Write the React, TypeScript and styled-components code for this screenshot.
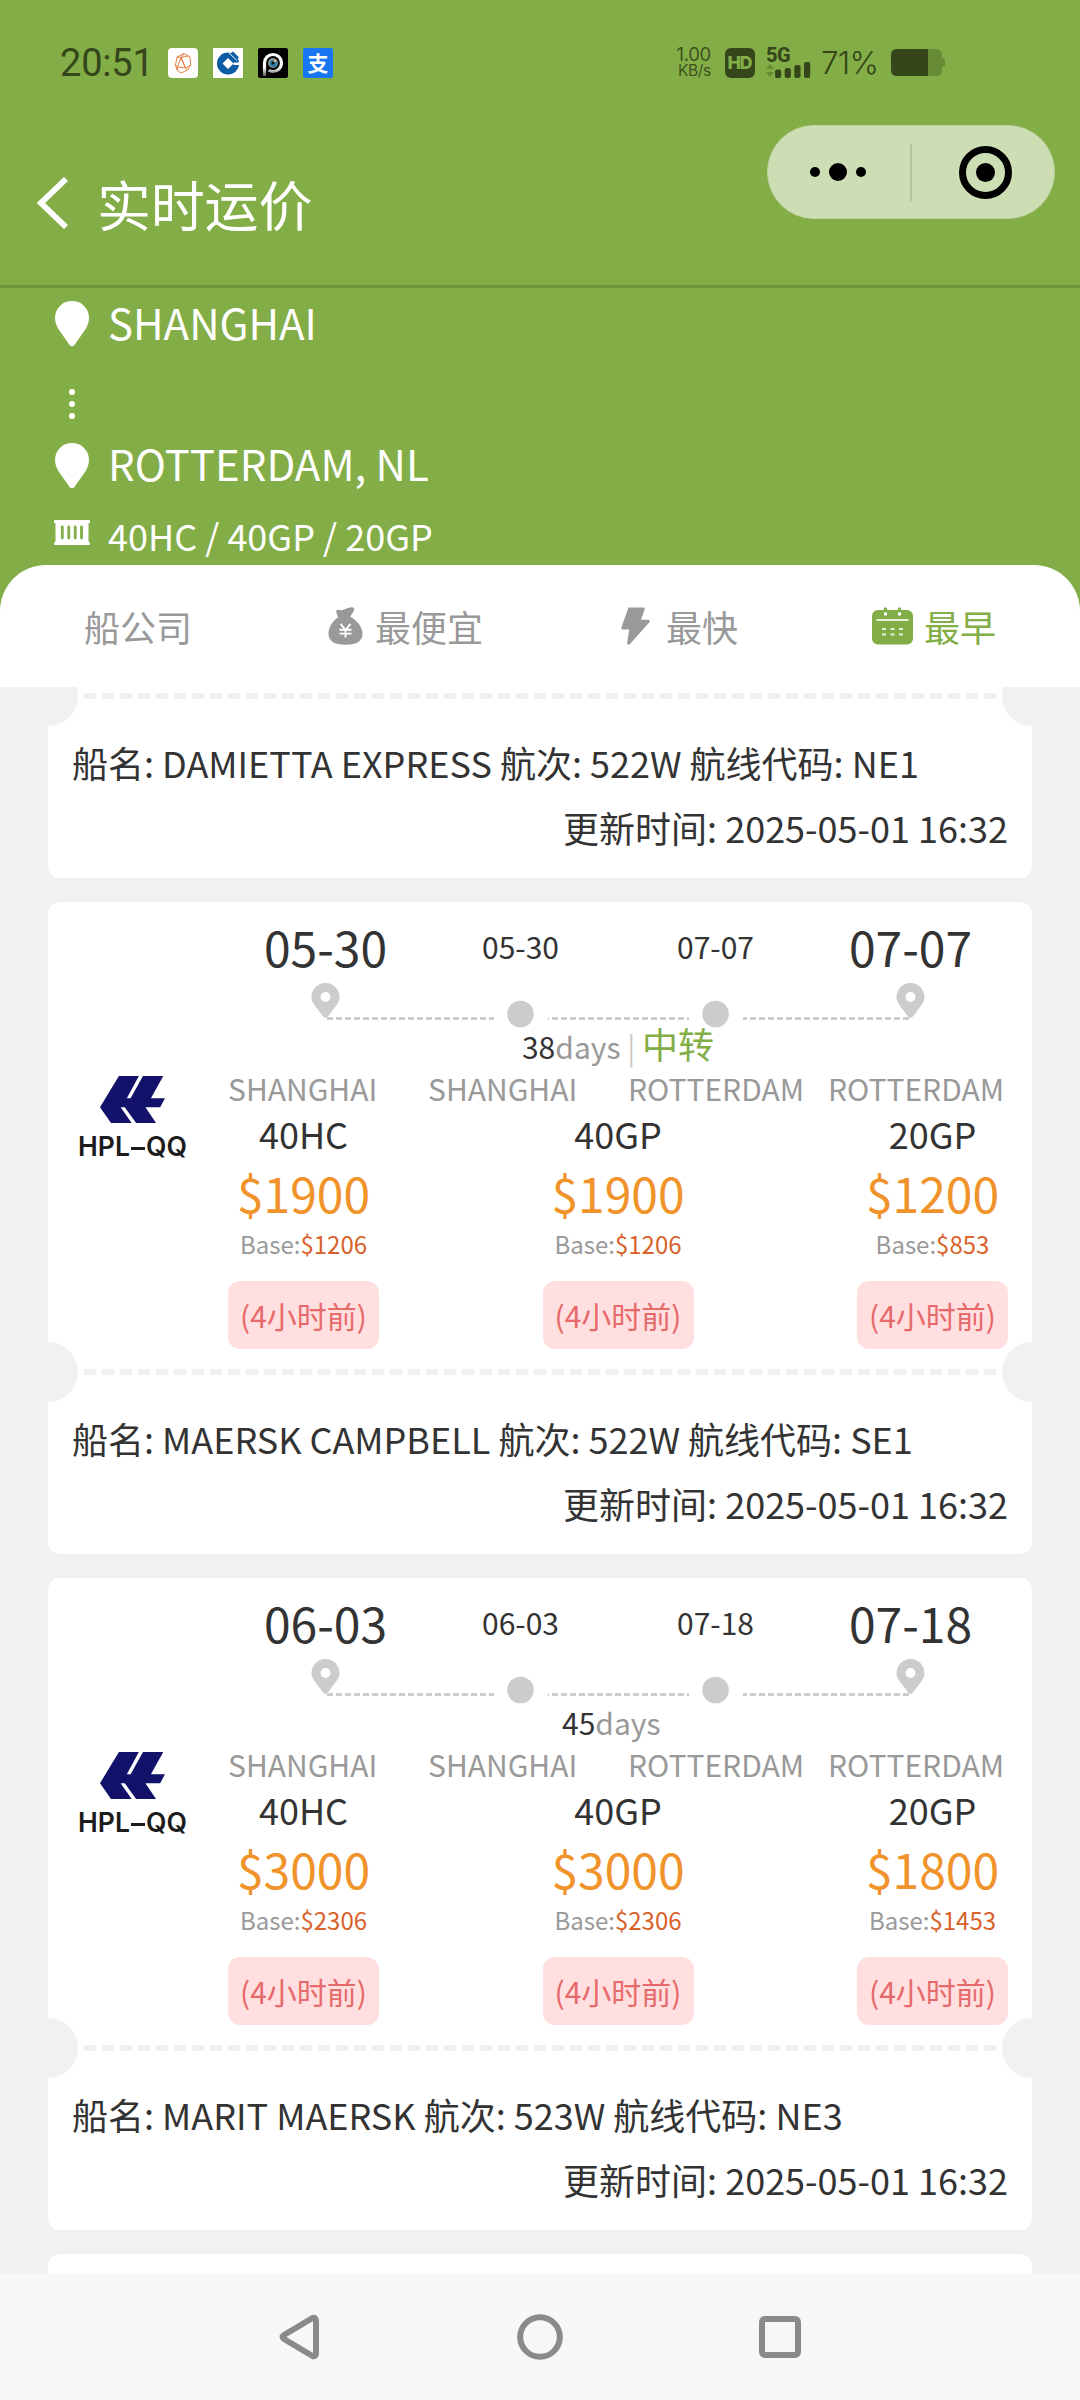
import React from "react";
import styled, { createGlobalStyle } from "styled-components";

const cjk = '"Noto Sans CJK SC", "Noto Sans", sans-serif';
const c = {
  green: "#83ad46",
  ink: "#333333",
  grey: "#999999",
  light: "#cccccc",
  bg: "#f1f1f1",
  status: "#35461a",
};

const GlobalStyle = createGlobalStyle`
  * { box-sizing: border-box; }
  body { margin: 0; background: ${c.bg}; }
  svg { display: block; flex: none; }
`;

const Screen = styled.div`
  width: 1080px;
  height: 2400px;
  display: flex;
  flex-direction: column;
  overflow: hidden;
  background: ${c.bg};
  font-family: ${cjk};
  color: ${c.ink};
  white-space: nowrap;
`;

const Top = styled.header`
  height: 288px;
  flex: none;
  background: ${c.green};
  border-bottom: 3px solid #719439;
`;

const StatusBar = styled.div`
  height: 125px;
  padding: 0 135px 0 60px;
  display: flex;
  align-items: center;
  color: ${c.status};
  font-family: Inter, Roboto, sans-serif;
`;

const Clock = styled.span`
  width: 108px;
  font: 400 38px/40px Roboto, sans-serif;
  letter-spacing: -0.2px;
`;

const AppIcons = styled.div`
  display: flex;
  gap: 15px;
  flex: 1;
`;

const AppIcon = styled.span<{ $bg: string; $radius?: number }>`
  width: 30px;
  height: 30px;
  border-radius: ${(p) => p.$radius ?? 4}px;
  background: ${(p) => p.$bg};
`;

const AlipayGlyph = styled.span`
  display: block;
  color: #fff;
  font: 700 21px/29px ${cjk};
  text-align: center;
`;

const Speed = styled.div`
  width: 36px;
  margin-right: 14px;
  display: flex;
  flex-direction: column;
  align-items: flex-end;
  color: #3d521d;
`;

const SpeedLine = styled.span<{ $size: number; $height: number }>`
  font-size: ${(p) => p.$size}px;
  line-height: ${(p) => p.$height}px;
  letter-spacing: -0.3px;
`;

const HdBadge = styled.span`
  width: 30px;
  height: 30px;
  margin-right: 11px;
  border-radius: 6px;
  background: ${c.status};
  color: ${c.green};
  font: 800 18px/30px Inter, sans-serif;
  letter-spacing: -1.6px;
  text-indent: -1.6px;
  text-align: center;
`;

const Signal = styled.div`
  width: 46px;
  margin-right: 9px;
`;

const SignalLabel = styled.div`
  height: 15px;
  font: 800 20px/15px Roboto, sans-serif;
  letter-spacing: -0.6px;
`;

const Percent = styled.span`
  width: 70px;
  font: 300 31.5px/34px Inter, sans-serif;
  letter-spacing: -0.8px;
  padding-top: 1px;
`;

const TitleBar = styled.div`
  height: 160px;
  padding: 0 25px 0 37px;
  display: flex;
  align-items: flex-start;
`;

const BackSlot = styled.div`
  width: 60px;
  padding-top: 52px;
`;

const Title = styled.h1`
  margin: 0;
  padding-top: 39px;
  flex: 1;
  font-weight: 400;
  font-size: 54px;
  line-height: 80px;
  letter-spacing: -0.2px;
  color: #fff;
`;

const Capsule = styled.div`
  width: 288px;
  height: 94px;
  border-radius: 47px;
  border: 1px solid #bfd2a0;
  background: #cdddb4;
  display: flex;
  align-items: center;
`;

const CapsuleHalf = styled.div`
  flex: 1;
  display: flex;
  justify-content: center;
`;

const CapsuleRule = styled.div`
  width: 2px;
  height: 57px;
  background: #b3c59a;
`;

const RouteHead = styled.section`
  height: 323px;
  flex: none;
  padding: 5px 0 0 54px;
  background: ${c.green};
  color: #fff;
`;

const RouteLine = styled.div<{ $height: number }>`
  height: ${(p) => p.$height}px;
  display: flex;
  align-items: center;
  gap: 18px;
`;

const RouteIcon = styled.span<{ $lift?: number }>`
  width: 36px;
  margin-bottom: ${(p) => p.$lift ?? 0}px;
  display: flex;
  justify-content: center;
`;

const PortName = styled.span`
  margin: -20px 0 -15px;
  font-size: 42px;
  line-height: 60px;
`;

const Boxes = styled.span`
  font-size: 36px;
  line-height: 52px;
`;

const Tabs = styled.nav`
  height: 122px;
  flex: none;
  margin-top: -46px;
  padding: 0 84px;
  border-radius: 46px 46px 0 0;
  background: #fff;
  display: flex;
  justify-content: space-between;
  align-items: center;
`;

const Tab = styled.div<{ $active?: boolean; $gap?: number; $shift?: number }>`
  display: flex;
  align-items: center;
  gap: ${(p) => p.$gap ?? 12}px;
  margin-left: ${(p) => p.$shift ?? 0}px;
  margin-right: ${(p) => -(p.$shift ?? 0)}px;
  font-size: 36px;
  line-height: 52px;
  color: ${(p) => (p.$active ? c.green : c.grey)};
`;

const TabText = styled.span`
  margin-bottom: 1px;
`;

const List = styled.main`
  flex: 1;
  min-height: 0;
  overflow: hidden;
  padding: 0 48px;
`;

const Card = styled.article<{ $cut?: boolean }>`
  margin: ${(p) => (p.$cut ? "-14px" : "0")} 0 24px;
  border-radius: 12px;
  background: #fff;
  overflow: hidden;
`;

const Body = styled.div`
  height: 447px;
  padding: 12px 24px 0;
  display: flex;
  justify-content: space-between;
`;

const Carrier = styled.div`
  width: 121px;
  padding-top: 162px;
  display: flex;
  flex-direction: column;
  align-items: center;
`;

const CarrierName = styled.div`
  margin-top: 8px;
  font: 600 26.5px/31px Inter, "Liberation Sans", sans-serif;
  color: #1c1c1c;
`;

const NameDash = styled.span`
  display: inline-block;
  width: 14px;
  height: 3px;
  margin: 0 1px;
  vertical-align: 6px;
  background: #1c1c1c;
`;

const Info = styled.div`
  width: 780px;
`;

const Dates = styled.div`
  height: 66px;
  margin-top: -1px;
  margin-bottom: 1px;
  display: grid;
  grid-template-columns: repeat(4, 1fr);
  text-align: center;
`;

const DateText = styled.span<{ $big?: boolean }>`
  font-size: ${(p) => (p.$big ? 48 : 30)}px;
  line-height: 66px;
`;

const Duration = styled.div`
  height: 30px;
  font-size: 36px;
  line-height: 30px;
  text-align: center;
  white-space: pre;
`;

const Small = styled.span<{ $color: string }>`
  font-size: 30px;
  color: ${(p) => p.$color};
`;

const Transit = styled.span`
  color: ${c.green};
`;

const Ports = styled.div`
  height: 52px;
  padding-top: 8px;
  display: grid;
  grid-template-columns: 200px 200px 200px 180px;
  font-size: 30px;
  line-height: 44px;
  color: ${c.grey};
`;

const Prices = styled.div`
  display: flex;
  justify-content: space-between;
`;

const PriceCol = styled.div`
  width: 151px;
  display: flex;
  flex-direction: column;
  align-items: center;
`;

const Box = styled.span`
  margin: -1px 0 1px;
  font-size: 36px;
  line-height: 48px;
`;

const Price = styled.span`
  font-size: 48px;
  line-height: 68px;
  color: #f0932b;
`;

const Base = styled.span`
  font-size: 24px;
  line-height: 36px;
  color: ${c.grey};
`;

const BaseValue = styled.span`
  color: #d9622a;
`;

const Ago = styled.span`
  width: 100%;
  margin-top: 19px;
  border-radius: 12px;
  background: #ffdfe0;
  color: #e66a6a;
  font-size: 30px;
  line-height: 68px;
  text-align: center;
`;

const Perforation = styled.div`
  position: relative;
  height: 46px;
  padding: 20px 36px;

  &::before,
  &::after {
    content: "";
    position: absolute;
    top: -7px;
    width: 60px;
    height: 60px;
    border-radius: 50%;
    background: ${c.bg};
  }
  &::before { left: -30px; }
  &::after { right: -30px; }
`;

const Dashes = styled.div`
  height: 6px;
  background: repeating-linear-gradient(90deg, ${c.bg} 0 12px, transparent 12px 18px);
`;

const Footer = styled.div`
  height: 159px;
  padding: 11px 24px 0;
  font-size: 36px;
  line-height: 65px;
`;

const Updated = styled.div`
  text-align: right;
`;

const NextCard = styled(Card)`
  height: 60px;
`;

const NavBar = styled.footer`
  height: 126px;
  flex: none;
  background: #f7f7f7;
  display: flex;
  justify-content: center;
  align-items: center;
  gap: 194px;
`;

const MapPin = () => (
  <svg width="34" height="46" viewBox="0 0 34 46">
    <path fill="#fff" d="M17 0C7.500 0 0 7.500 0 17c0 4.500 1.800 8.300 4 12l10.800 15.200c1.200 1.400 3.200 1.400 4.400 0L30 29c2.200-3.700 4-7.500 4-12C34 7.500 26.500 0 17 0z" />
  </svg>
);

const ContainerIcon = () => (
  <svg width="36" height="25" viewBox="0 0 36 25">
    <path fill="#fff" d="M1 0h34q1 0 1 1v1q0 1-1.500 1.500V21.500q1.500.5 1.500 1.500v1q0 1-1 1H1q-1 0-1-1v-1q0-1 1.500-1.500V3.500Q0 3 0 2V1q0-1 1-1z" />
    <path stroke={c.green} strokeWidth="2.800" strokeLinecap="round" d="M8.300 7v11M14.800 7v11M21.200 7v11M27.500 7v11" />
  </svg>
);

const BagIcon = () => (
  <svg width="35" height="38" viewBox="0 0 35 38">
    <path fill={c.grey} d="M10 10.500C9.500 7 7.500 5.500 8.500 3.500c1-1.500 3 0 5-.2C17 2.700 20 .2 23.500.2c3 0 3.300 2.300 2 4.300l-3.300 5.300C28.500 13 34.500 20 34.500 26.500c0 7.500-5.500 11.300-17 11.300S.5 34 .5 26.500C.5 20 5 13.500 10 10.500z" />
    <path fill="none" stroke="#fff" strokeWidth="1.900" d="M12.500 16.800l5 6.200 5-6.200M17.500 22.500v8M11.500 22.800h12M11.500 26.600h12" />
  </svg>
);

const BoltIcon = () => (
  <svg width="29" height="38" viewBox="0 0 29 38">
    <path fill={c.grey} d="M8.500.5h13.800c1.200 0 1.700 1 1.300 2L20 12.800h7c1.600 0 2.100 1.400 1.200 2.600L9 36.900c-1.300 1.500-3.200.7-2.900-1.200L8.300 22.500H1.800c-1.300 0-1.800-1-1.400-2.100L7 1.700C7.300.9 7.700.5 8.500.5z" />
  </svg>
);

const CalendarIcon = () => (
  <svg width="41" height="38" viewBox="0 0 41 38">
    <rect y="3" width="41" height="34.500" rx="6" fill={c.green} />
    <path stroke="#fff" strokeWidth="3" d="M13.500 3v5.500M27.500 3v5.500" />
    <path stroke={c.green} strokeWidth="3.400" strokeLinecap="round" d="M13.500 2v2M27.500 2v2" />
    <path stroke="#e6f0d8" strokeWidth="2" d="M4.500 13h32M10 22h4M18.500 22h4M27 22h4M10 27.500h4M18.500 27.500h4M27 27.500h4" />
  </svg>
);

const pin =
  "M14 0C6.200 0 0 6.300 0 14c0 3.500 1.500 6 3.300 8.500l8.300 11c1.200 1.800 3.600 1.800 4.800 0l8.300-11C26.500 20 28 17.500 28 14 28 6.300 21.800 0 14 0zm0 9a5 5 0 1 1 0 10 5 5 0 0 1 0-10z";

const Track = () => (
  <svg width="780" height="48" viewBox="0 0 780 48">
    <g fill={c.light}>
      <path transform="translate(83.500 3)" d={pin} />
      <path transform="translate(668.500 3)" d={pin} />
      <circle cx="292.500" cy="34" r="13.300" />
      <circle cx="487.500" cy="34" r="13.300" />
    </g>
    <g stroke={c.light} strokeWidth="3" strokeDasharray="6 3">
      <path d="M99 38.500H266" />
      <path d="M320 38.500H461" strokeDashoffset="5" />
      <path d="M515 38.500H682" strokeDashoffset="2" />
    </g>
  </svg>
);

const CarrierLogo = () => (
  <svg width="65" height="47" viewBox="290 558 189 140" preserveAspectRatio="none">
    <path fill="#12126b" d="M345 558H403L368 624H379L415 558H474L438 624H479L465 651H422L453 698H395L362 651H350L382 698H322L290 651z" />
  </svg>
);

const GemIcon = () => (
  <svg width="30" height="30" viewBox="0 0 30 30" fill="none" stroke="#e67f45" strokeWidth="1">
    <path d="M16 5.500l6 3.500.8 8-3.300 5-6.500 3-4-3-1.500-5L9 9zM9 9l4 .5L20.500 8M16 5.500L13 9.500M13 9.500l-3.500 9.500 8 1zM22.800 17L17.500 20 13 9.500M7.500 17l2 2M17.500 20l2 2M9.500 19L9 22" />
  </svg>
);

const BankIcon = () => (
  <svg width="30" height="30" viewBox="0 0 30 30">
    <circle cx="15" cy="15.500" r="11" fill="#0b5ba5" />
    <path fill="#fff" d="M15 10l5.500 5.500L15 21l-5.500-5.500zM20.500 14.500H27v2.500h-6.500z" />
    <path fill="#0b5ba5" d="M17 6l3-2.500 6 6-5.500 5-5-5z" />
    <path stroke="#fff" strokeWidth="1" d="M15.500 4.500l8.500 8" />
  </svg>
);

const CameraIcon = () => (
  <svg width="30" height="30" viewBox="0 0 30 30">
    <defs>
      <linearGradient id="stem" x1="0" y1="0" x2="0" y2="1">
        <stop offset="0.6" stopColor="#fff" />
        <stop offset="1" stopColor="#555" />
      </linearGradient>
    </defs>
    <path d="M6.500 28V15a8.500 8.500 0 1 1 8.500 8.500c-1.500 0-3-.3-4.300-1.200" fill="none" stroke="url(#stem)" strokeWidth="3.200" />
    <circle cx="15" cy="15" r="5" fill="#8a8f93" />
    <circle cx="15.500" cy="15.500" r="3.600" fill="#2b7fae" />
    <circle cx="15" cy="15" r="1.600" fill="#111" />
    <circle cx="17" cy="13" r="1.200" fill="#e8c27a" />
  </svg>
);

const SignalBars = () => (
  <svg width="46" height="15" viewBox="0 0 46 15" overflow="visible">
    <path fill="#688b36" d="M0 6l4-5 4 5zM0 9h8l-4 5z" />
    <g fill={c.status}>
      <rect x="9" y="6.500" width="6.200" height="8.500" rx="2" />
      <rect x="18.700" y="5" width="6.200" height="10" rx="2" />
      <rect x="28.300" y="2" width="6.200" height="13" rx="2" />
      <rect x="38" y="-1" width="6.200" height="16" rx="2" />
    </g>
  </svg>
);

const Battery = () => (
  <svg width="54" height="27" viewBox="0 0 54 27">
    <path fill="#688b36" d="M36 0h9q6 0 6 6v3q3 0 3 2.500v4q0 2.500-3 2.500v3q0 6-6 6h-9z" />
    <path fill={c.status} d="M6 0h31v27H6q-6 0-6-6V6q0-6 6-6z" />
  </svg>
);

type Quote = { box: string; price: string; base: string };
type Sailing = {
  etd?: string;
  eta?: string;
  days?: string;
  transit?: boolean;
  quotes?: Quote[];
  vessel: string;
  voyage: string;
  service: string;
};

const sailings: Sailing[] = [
  { vessel: "DAMIETTA EXPRESS", voyage: "522W", service: "NE1" },
  {
    etd: "05-30",
    eta: "07-07",
    days: "38",
    transit: true,
    quotes: [
      { box: "40HC", price: "$1900", base: "$1206" },
      { box: "40GP", price: "$1900", base: "$1206" },
      { box: "20GP", price: "$1200", base: "$853" },
    ],
    vessel: "MAERSK CAMPBELL",
    voyage: "522W",
    service: "SE1",
  },
  {
    etd: "06-03",
    eta: "07-18",
    days: "45",
    quotes: [
      { box: "40HC", price: "$3000", base: "$2306" },
      { box: "40GP", price: "$3000", base: "$2306" },
      { box: "20GP", price: "$1800", base: "$1453" },
    ],
    vessel: "MARIT MAERSK",
    voyage: "523W",
    service: "NE3",
  },
];

const SailingCard = ({ s }: { s: Sailing }) => (
  <Card $cut={!s.quotes}>
    {s.quotes && (
      <Body>
        <Carrier>
          <CarrierLogo />
          <CarrierName>HPL<NameDash />QQ</CarrierName>
        </Carrier>
        <Info>
          <Dates>
            <DateText $big>{s.etd}</DateText>
            <DateText>{s.etd}</DateText>
            <DateText>{s.eta}</DateText>
            <DateText $big>{s.eta}</DateText>
          </Dates>
          <Track />
          <Duration>
            <Small $color={c.ink}>{s.days}</Small>
            <Small $color={c.grey}>days</Small>
            {s.transit ? (
              <>
                <Small $color={c.light}> | </Small>
                <Transit>中转</Transit>
              </>
            ) : (
              <Small $color={c.grey}>{"  "}</Small>
            )}
          </Duration>
          <Ports>
            <span>SHANGHAI</span>
            <span>SHANGHAI</span>
            <span>ROTTERDAM</span>
            <span>ROTTERDAM</span>
          </Ports>
          <Prices>
            {s.quotes.map((q) => (
              <PriceCol key={q.box}>
                <Box>{q.box}</Box>
                <Price>{q.price}</Price>
                <Base>
                  Base:<BaseValue>{q.base}</BaseValue>
                </Base>
                <Ago>(4小时前)</Ago>
              </PriceCol>
            ))}
          </Prices>
        </Info>
      </Body>
    )}
    <Perforation>
      <Dashes />
    </Perforation>
    <Footer>
      <div>{`船名: ${s.vessel} 航次: ${s.voyage} 航线代码: ${s.service}`}</div>
      <Updated>更新时间: 2025-05-01 16:32</Updated>
    </Footer>
  </Card>
);

export default function App() {
  return (
    <Screen lang="zh-CN">
      <GlobalStyle />
      <Top>
        <StatusBar>
          <Clock>20:51</Clock>
          <AppIcons>
            <AppIcon $bg="#fff"><GemIcon /></AppIcon>
            <AppIcon $bg="#fff" $radius={0}><BankIcon /></AppIcon>
            <AppIcon $bg="#000" $radius={2}><CameraIcon /></AppIcon>
            <AppIcon $bg="#1677f0" $radius={2}><AlipayGlyph>支</AlipayGlyph></AppIcon>
          </AppIcons>
          <Speed>
            <SpeedLine $size={18.5} $height={16}>1.00</SpeedLine>
            <SpeedLine $size={15.5} $height={17}>KB/s</SpeedLine>
          </Speed>
          <HdBadge>HD</HdBadge>
          <Signal>
            <SignalLabel>5G</SignalLabel>
            <SignalBars />
          </Signal>
          <Percent>71%</Percent>
          <Battery />
        </StatusBar>
        <TitleBar>
          <BackSlot>
            <svg width="32" height="52" viewBox="0 0 32 52">
              <path d="M29 2L4 26 29 50" fill="none" stroke="#fff" strokeWidth="5.800" />
            </svg>
          </BackSlot>
          <Title>实时运价</Title>
          <Capsule>
            <CapsuleHalf>
              <svg width="58" height="20" viewBox="0 0 58 20">
                <circle cx="5" cy="10" r="5" />
                <circle cx="28" cy="10" r="9" />
                <circle cx="51" cy="10" r="5" />
              </svg>
            </CapsuleHalf>
            <CapsuleRule />
            <CapsuleHalf>
              <svg width="58" height="54" viewBox="0 0 58 54">
                <circle cx="31.500" cy="27.500" r="23" fill="none" stroke="#000" strokeWidth="7" />
                <circle cx="31.500" cy="27.500" r="9.500" />
              </svg>
            </CapsuleHalf>
          </Capsule>
        </TitleBar>
      </Top>
      <RouteHead>
        <RouteLine $height={62}>
          <RouteIcon><MapPin /></RouteIcon>
          <PortName>SHANGHAI</PortName>
        </RouteLine>
        <RouteLine $height={98}>
          <RouteIcon>
            <svg width="6" height="30" viewBox="0 0 6 30" fill="#fff">
              <circle cx="3" cy="3" r="3" />
              <circle cx="3" cy="15" r="3" />
              <circle cx="3" cy="27" r="3" />
            </svg>
          </RouteIcon>
        </RouteLine>
        <RouteLine $height={25}>
          <RouteIcon><MapPin /></RouteIcon>
          <PortName>ROTTERDAM, NL</PortName>
        </RouteLine>
        <RouteLine $height={114}>
          <RouteIcon $lift={5}><ContainerIcon /></RouteIcon>
          <Boxes>40HC / 40GP / 20GP</Boxes>
        </RouteLine>
      </RouteHead>
      <Tabs>
        <Tab><TabText>船公司</TabText></Tab>
        <Tab><BagIcon /><TabText>最便宜</TabText></Tab>
        <Tab $gap={16} $shift={2}><BoltIcon /><TabText>最快</TabText></Tab>
        <Tab $active $gap={11}><CalendarIcon /><TabText>最早</TabText></Tab>
      </Tabs>
      <List>
        {sailings.map((s) => (
          <SailingCard key={s.vessel} s={s} />
        ))}
        <NextCard as="div" />
      </List>
      <NavBar>
        <svg width="46" height="46" viewBox="0 0 46 46">
          <path d="M35.500 4L7 21Q4 23 7 25L35.500 42Q39 43 39 39V7Q39 3 35.500 4z" fill="none" stroke="#8a8a8a" strokeWidth="6" strokeLinejoin="round" />
        </svg>
        <svg width="46" height="46" viewBox="0 0 46 46">
          <circle cx="23" cy="23" r="19.800" fill="none" stroke="#8a8a8a" strokeWidth="6" />
        </svg>
        <svg width="46" height="46" viewBox="0 0 46 46">
          <rect x="5" y="5" width="36" height="36" rx="3" fill="none" stroke="#8a8a8a" strokeWidth="6" />
        </svg>
      </NavBar>
    </Screen>
  );
}
